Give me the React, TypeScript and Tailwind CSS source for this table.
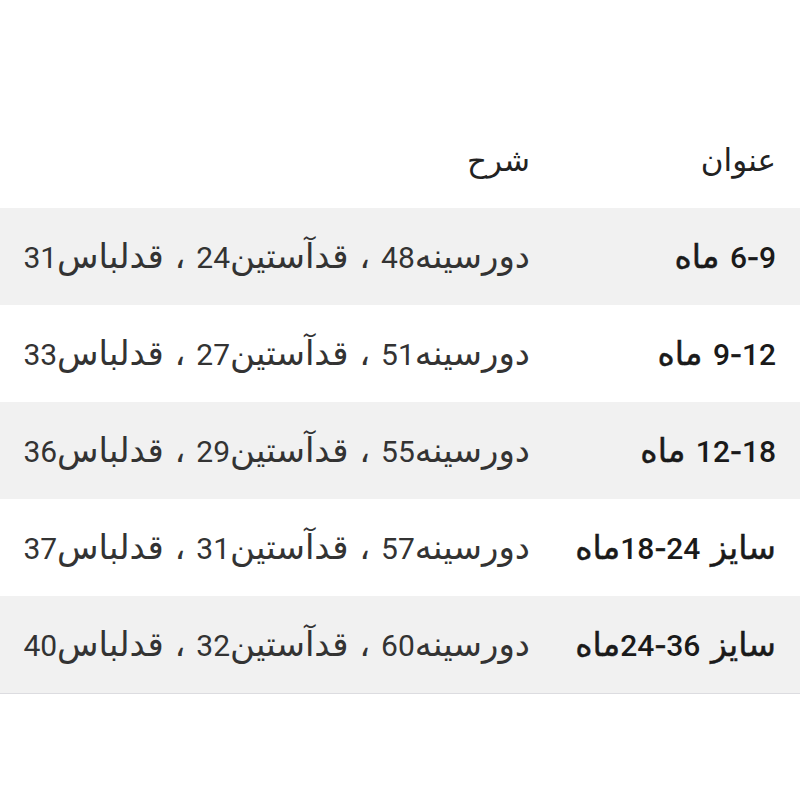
const rows = [
  { title: "6-9 ماه", desc: "دورسینه48 ، قدآستین24 ، قدلباس31" },
  { title: "9-12 ماه", desc: "دورسینه51 ، قدآستین27 ، قدلباس33" },
  { title: "12-18 ماه", desc: "دورسینه55 ، قدآستین29 ، قدلباس36" },
  { title: "سایز 24-18ماه", desc: "دورسینه57 ، قدآستین31 ، قدلباس37" },
  { title: "سایز 36-24ماه", desc: "دورسینه60 ، قدآستین32 ، قدلباس40" },
];

// digits in Roboto, Arabic letters in DejaVu Sans
function Mixed({ text, digitClass = "" }: { text: string; digitClass?: string }) {
  const parts = text.split(/([0-9]+)/);
  return (
    <>
      {parts.map((p, i) =>
        /[0-9]/.test(p) ? (
          <span key={i} className={`font-['Roboto'] ${digitClass}`}>
            {p}
          </span>
        ) : (
          <span key={i}>{p}</span>
        )
      )}
    </>
  );
}

export default function App() {
  return (
    <div dir="rtl" className="h-[800px] w-[800px] bg-white pt-[112px] font-['DejaVu_Sans',sans-serif] text-[#222]">
      <table className="w-full table-fixed border-collapse border-b border-[#dcdce0]">
        <thead>
          <tr className="h-[96px] text-[31px]">
            <th className="w-[246px] px-6 text-right font-normal">عنوان</th>
            <th className="px-6 text-right font-normal">شرح</th>
          </tr>
        </thead>
        <tbody>
          {rows.map((r, i) => (
            <tr key={r.title} className={i % 2 === 0 ? "h-[97px] bg-[#f1f1f1]" : "h-[97px] bg-white"}>
              <td className="whitespace-nowrap px-6 text-right text-[33px] font-medium text-[#1a1a1a] [-webkit-text-stroke:0.5px_#1a1a1a]">
                <Mixed text={r.title} digitClass="text-[30px] [-webkit-text-stroke:0]" />
              </td>
              <td className="whitespace-nowrap px-6 text-right text-[34px] text-[#333]">
                <Mixed text={r.desc} digitClass="text-[30px]" />
              </td>
            </tr>
          ))}
        </tbody>
      </table>
    </div>
  );
}
